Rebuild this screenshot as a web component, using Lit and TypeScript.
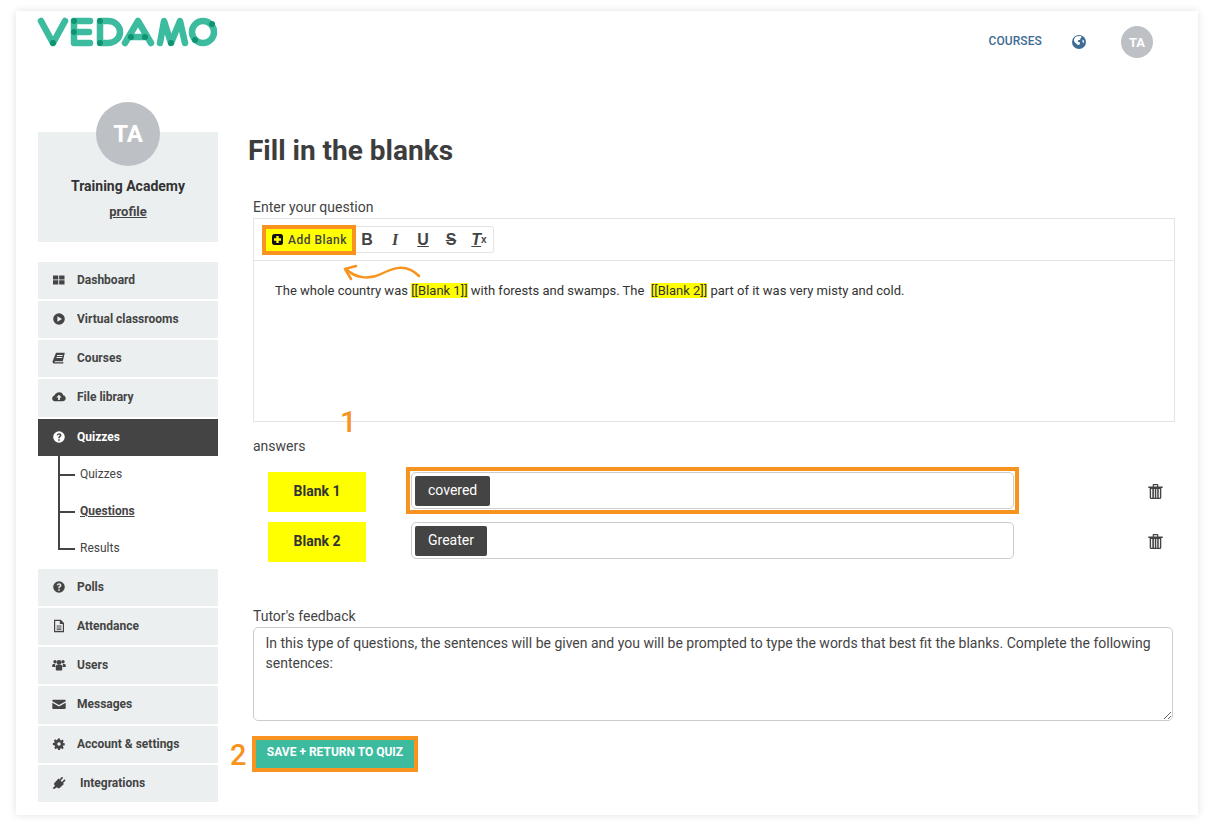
import { LitElement, html, css, svg } from "lit";
import { customElement } from "lit/decorators.js";

const icons: Record<string, unknown> = {
  dashboard: svg`<path d="M1 2.500h5.300v4H1zM7.200 2.500h5.300v4H7.200zM1 7.300h5.300v4.200H1zM7.200 7.300h5.300v4.200H7.200z"/>`,
  play: svg`<path fill-rule="evenodd" d="M7 1.200a5.800 5.800 0 1 0 0 11.600A5.800 5.800 0 0 0 7 1.200zM5.400 4.200l4.600 2.800-4.600 2.800z"/>`,
  book: svg`<path d="M4 1.800h8.800l-2 8.400H3.200c-.8 0-1 .9-.3 1h8.600l-.3 1.200H2.200c-1.300 0-1.900-1-1.600-2.200zM5 4v.9h5.600l.2-.9zM4.500 6v.9h5.600l.2-.9z" fill-rule="evenodd"/>`,
  cloud: svg`<path fill-rule="evenodd" d="M7.500 2.300c1.900 0 3.300 1.300 3.600 3 1.500.3 2.600 1.400 2.600 3 0 1.800-1.400 3-3.100 3H3.300C1.500 11.300.2 10 .2 8.400c0-1.400.9-2.500 2.200-2.900.5-1.900 2.700-3.200 5.100-3.200zM7 4.800L4.300 7.600h1.800v2.300h1.800V7.600h1.800z"/>`,
  question: svg`<path fill-rule="evenodd" d="M7 1.200a5.800 5.800 0 1 0 0 11.600A5.800 5.800 0 0 0 7 1.200zM6.200 9.300h1.600v1.500H6.200zM4.700 5.300C4.900 4 5.900 3.300 7.100 3.300c1.300 0 2.300.8 2.300 2 0 1-.5 1.400-1.100 1.800-.4.300-.5.500-.5 1.200H6.200c0-1.100.2-1.600.9-2.100.4-.3.700-.5.700-.9s-.3-.7-.8-.7-.8.300-.9.900z"/>`,
  file: svg`<path fill-rule="evenodd" d="M2 .8h6.800L12 4v9.200H2zM3.200 2v10h7.600V5H7.800V2zM4.600 6.400h4.800v1H4.600zM4.600 8.400h4.800v1H4.600zM4.600 10.300h4.800v1H4.600z"/>`,
  users: svg`<circle cx="3" cy="3.800" r="1.700"/><circle cx="11" cy="3.800" r="1.700"/><circle cx="7" cy="4.500" r="2.400"/><path d="M.2 9V7.400c0-1 .8-1.500 1.800-1.500h1.200c-.3 1-.1 2.100.4 3.100zM13.800 9V7.400c0-1-.8-1.500-1.800-1.500h-1.200c.3 1 .1 2.100-.4 3.100zM3.800 7.800c.5-.7 1-1 1.500-1 .5.400 2.900.4 3.400 0 .5 0 1 .3 1.500 1v3.600c0 .7-.5 1.100-1.100 1.100H4.900c-.6 0-1.100-.4-1.100-1.100z"/>`,
  mail: svg`<path d="M1.200 2.800h11.600c.5 0 .9.400.9.900v.5L7 8 .3 4.200v-.5c0-.5.400-.9.900-.9zM.3 5.800L7 9.600l6.700-3.800v5.300c0 .5-.4.900-.9.900H1.200c-.5 0-.9-.4-.9-.9z"/>`,
  gear: svg`<path fill-rule="evenodd" d="M5.900 1h2.200l.3 1.700 1 .4 1.400-1 1.500 1.500-1 1.400.4 1 1.700.3v2.200l-1.700.3-.4 1 1 1.400-1.500 1.500-1.400-1-1 .4-.3 1.700H5.900l-.3-1.700-1-.4-1.400 1-1.500-1.500 1-1.400-.4-1L.1 8.100V5.900l1.700-.3.4-1-1-1.400 1.500-1.500 1.400 1 1-.4zM7 5a2 2 0 1 0 0 4 2 2 0 0 0 0-4z" transform="translate(.7 .7) scale(.9)"/>`,
  plug: svg`<path d="M.6 13.400l2.700-2.900-.8-.9c-.5-.6-.4-1.500.1-2L7 2.800l1 1 2.300-2.500c.4-.4 1-.4 1.300 0s.3.900 0 1.300L9.300 5l1.500 1.400L13 4.200c.4-.4.900-.4 1.300 0s.3.900 0 1.200L12 7.700l1 1-4.700 4.300c-.7.500-1.500.6-2 .1l-1-.9-2.900 2z" transform="scale(.92)"/>`,
};

const menuTop = [
  { label: "Dashboard", icon: "dashboard" },
  { label: "Virtual classrooms", icon: "play" },
  { label: "Courses", icon: "book" },
  { label: "File library", icon: "cloud" },
  { label: "Quizzes", icon: "question", active: true },
];

const menuBottom = [
  { label: "Polls", icon: "question" },
  { label: "Attendance", icon: "file" },
  { label: "Users", icon: "users" },
  { label: "Messages", icon: "mail" },
  { label: "Account & settings", icon: "gear" },
  { label: "Integrations", icon: "plug", wide: true },
];

const subMenu = [
  { label: "Quizzes" },
  { label: "Questions", current: true },
  { label: "Results" },
];

const answers = [
  { blank: "Blank 1", word: "covered", marked: true },
  { blank: "Blank 2", word: "Greater" },
];

const trash = html`<svg class="trash" viewBox="0 0 15 15" width="15" height="15">
  <path d="M.3 2.600h14.400v1.300H.3zM4.700 2.600V1.100c0-.6.400-1 1-1h3.600c.6 0 1 .4 1 1v1.500H9.100V1.300H5.900v1.300z" fill="#444"/>
  <path fill-rule="evenodd" d="M1.700 3.800h11.600v9.700c0 .9-.6 1.500-1.400 1.500H3.100c-.8 0-1.400-.6-1.400-1.500zM3.100 5v8.400c0 .2.100.3.300.3h.9V5zM5.900 5v8.700h.9V5zM8.300 5v8.700h.9V5zM10.700 5v8.700h.9c.2 0 .3-.1.300-.3V5z" fill="#444"/>
</svg>`;

@customElement("app-root")
export class AppRoot extends LitElement {
  static styles = css`
    :host {
      display: block;
      box-sizing: border-box;
      height: 826px;
      padding: 11px 16px;
      background: #fff;
      font-family: Roboto, "Liberation Sans", sans-serif;
      font-size: 14px;
      color: #444;
    }
    .page {
      position: relative;
      height: 804px;
      background: #fff;
      box-shadow: 0 0 8px rgba(0, 0, 0, 0.12);
      overflow: hidden;
    }
    header {
      display: flex;
      height: 91px;
      padding: 1px 45px 0 18px;
      box-sizing: border-box;
    }
    .logo {
      display: block;
    }
    .top-nav {
      display: flex;
      align-items: center;
      margin-left: auto;
      margin-top: 14px;
      height: 32px;
    }
    .top-nav .link {
      padding-bottom: 2px;
      font-size: 12px;
      font-weight: 500;
      letter-spacing: 0.1px;
      color: #3f6c94;
    }
    .top-nav svg {
      margin: 0 35px 0 30px;
    }
    .avatar {
      display: flex;
      align-items: center;
      justify-content: center;
      border-radius: 50%;
      background: #bdc1c5;
      color: #fff;
      font-weight: 700;
    }
    .avatar.small {
      width: 32px;
      height: 32px;
      font-size: 13px;
    }
    .avatar.big {
      width: 64px;
      height: 64px;
      font-size: 24px;
      margin-top: -30px;
    }
    .content {
      display: flex;
      padding: 0 23px 0 22px;
    }
    aside {
      flex: 0 0 180px;
      width: 180px;
    }
    .profile {
      display: flex;
      flex-direction: column;
      align-items: center;
      height: 110px;
      margin-top: 30px;
      margin-bottom: 20px;
      background: #ebeff0;
    }
    .profile .name {
      margin-top: 10px;
      font-weight: 700;
      font-size: 14px;
      line-height: 20px;
      color: #333;
    }
    .profile .link {
      margin-top: 6px;
      font-size: 13px;
      font-weight: 700;
      line-height: 20px;
      text-decoration: underline;
    }
    .menu {
      display: flex;
      flex-direction: column;
      gap: 2px;
    }
    .item {
      display: flex;
      align-items: center;
      gap: 11px;
      box-sizing: border-box;
      height: 37.15px;
      padding: 0 0 1.1px 14px;
      background: #ebeff0;
      font-size: 12px;
      font-weight: 700;
      color: #444;
    }
    .item svg {
      flex: none;
      fill: currentColor;
    }
    .item.wide {
      gap: 14px;
    }
    .item.active {
      background: #444;
      color: #fff;
    }
    .sub {
      display: flex;
      flex-direction: column;
      height: 113.35px;
    }
    .sub a {
      position: relative;
      display: block;
      height: 37px;
      padding-left: 42px;
      line-height: 36px;
      font-size: 12px;
      color: #444;
    }
    .sub a.current {
      font-weight: 700;
      text-decoration: underline;
    }
    .sub a::before {
      content: "";
      position: absolute;
      left: 20px;
      top: 0;
      bottom: 0;
      width: 2px;
      background: #444;
    }
    .sub a:last-child::before {
      bottom: 17px;
    }
    .sub a::after {
      content: "";
      position: absolute;
      left: 20px;
      top: 18px;
      width: 17px;
      height: 2px;
      background: #444;
    }
    main {
      flex: 1;
      margin-left: 30px;
      min-width: 0;
    }
    h1 {
      margin: 32px 0 29px;
      font-size: 28px;
      font-weight: 700;
      line-height: 34px;
      color: #3d3d3d;
    }
    .form {
      margin-left: 5px;
    }
    label {
      display: block;
      line-height: 20px;
      font-size: 14px;
      color: #444;
    }
    .editor {
      height: 204px;
      margin-top: 1px;
      box-sizing: border-box;
      border: 1px solid #e3e3e3;
    }
    .toolbar {
      display: flex;
      align-items: flex-start;
      box-sizing: border-box;
      height: 42px;
      padding: 7px 0 0 9px;
      border-bottom: 1px solid #e3e3e3;
    }
    .tools {
      display: flex;
      align-items: center;
      box-sizing: border-box;
      width: 231px;
      height: 27px;
      padding-left: 2px;
      border: 1px solid #e3e3e3;
      border-radius: 3px;
    }
    .add {
      display: flex;
      flex: none;
      align-items: center;
      gap: 5px;
      box-sizing: border-box;
      width: 86px;
      height: 22px;
      margin-right: 1px;
      padding-left: 6px;
      background: #ff0;
      outline: 4px solid #f7931e;
      font-size: 12px;
      font-weight: 500;
      letter-spacing: 0.5px;
      white-space: nowrap;
      color: #444;
    }
    .tool {
      display: flex;
      justify-content: center;
      align-items: center;
      flex: none;
      width: 28px;
      font-family: "Liberation Sans", sans-serif;
      font-size: 16px;
      line-height: 20px;
      font-weight: 700;
      color: #444;
    }
    .tool.i {
      font-family: "Liberation Serif", serif;
      font-style: italic;
    }
    .tool.u {
      text-decoration: underline;
    }
    .tool.s {
      text-decoration: line-through;
    }
    .tool .tx {
      font-style: italic;
      text-decoration: underline;
    }
    .tool sub {
      font-size: 10px;
      line-height: 0;
      font-style: normal;
    }
    .text {
      margin: 20px 0 0 21px;
      font-size: 13px;
      line-height: 20px;
      color: #333;
      white-space: pre;
    }
    .text mark {
      background: #ff0;
      color: #333;
    }
    .answers-label {
      margin-top: 14px;
    }
    .rows {
      display: flex;
      flex-direction: column;
      gap: 10px;
      margin-top: 16px;
    }
    .row {
      display: flex;
      align-items: flex-start;
      padding: 0 12.5px 0 15px;
    }
    .blank {
      flex: 0 0 98px;
      height: 40px;
      line-height: 39px;
      text-align: center;
      background: #ff0;
      font-weight: 700;
      color: #333;
    }
    .input {
      position: relative;
      box-sizing: border-box;
      flex: 0 0 603px;
      height: 37px;
      margin-left: 45px;
      padding: 3px;
      border: 1px solid #ccc;
      border-radius: 5px;
      background: #fff;
    }
    .input.marked::after {
      content: "";
      position: absolute;
      inset: -6px;
      border: 4px solid #f7931e;
    }
    .tag {
      display: inline-block;
      height: 30px;
      padding: 0 13px;
      line-height: 28px;
      border-radius: 2px;
      background: #444;
      color: #fff;
      font-size: 14px;
    }
    .trash {
      display: block;
      margin: 12px 0 0 auto;
    }
    .feedback-label {
      margin-top: 44px;
    }
    textarea {
      display: block;
      box-sizing: border-box;
      width: 920px;
      height: 94px;
      margin: 1px 0 0;
      padding: 5px 12px 5px 11.5px;
      border: 1px solid #ccc;
      border-radius: 5px;
      outline: none;
      font-family: inherit;
      font-size: 14px;
      line-height: 20px;
      color: #444;
      background: #fff;
    }
    .save {
      display: block;
      box-sizing: border-box;
      width: 158px;
      height: 28px;
      margin: 19px 0 0 3px;
      padding: 0 0 5px;
      border: 0;
      background: #3dbb9f;
      outline: 4px solid #f7931e;
      color: #fff;
      font-family: inherit;
      font-size: 12px;
      font-weight: 700;
      line-height: 24px;
    }
    .step {
      position: absolute;
      font-size: 29px;
      line-height: 34px;
      font-weight: 500;
      color: #f7931e;
    }
    .step.one {
      left: 324px;
      top: 394px;
    }
    .step.two {
      left: 214px;
      top: 727px;
    }
    .arrow {
      position: absolute;
      left: 324px;
      top: 251px;
      fill: none;
      stroke: #f7931e;
      stroke-width: 2.5;
      stroke-linecap: round;
      stroke-linejoin: round;
    }
  `;

  private renderItem(it: { label: string; icon: string; active?: boolean; wide?: boolean }) {
    const cls = `item${it.active ? " active" : ""}${it.wide ? " wide" : ""}`;
    return html`<div class=${cls}>
      <svg viewBox="0 0 14 14" width="14" height="14">${icons[it.icon]}</svg>
      <span>${it.label}</span>
    </div>`;
  }

  render() {
    return html`
      <div class="page">
        <header>
          <svg class="logo" viewBox="34 12 190 40" width="190" height="40">
            <g fill="none" stroke="#3dbb9f" stroke-width="6.5" stroke-linecap="round" stroke-linejoin="round">
              <path d="M41 21L53 43 65 21"/>
              <path d="M90 21H74v22h16M74 32h15"/>
              <path d="M100 21h8c7 0 12 5 12 11s-5 11-12 11h-8z"/>
              <path d="M125 43l13-22 13 22M131 37h14"/>
              <path d="M160 43l4-22 7 22 9-22 5 22"/>
              <circle cx="203" cy="32" r="11"/>
            </g>
            <g fill="#0e9470">
              <circle cx="53" cy="43" r="3"/>
              <circle cx="74" cy="21" r="3"/>
              <circle cx="74" cy="32" r="3"/>
              <circle cx="100" cy="21" r="3"/>
              <circle cx="100" cy="43" r="3"/>
              <circle cx="131" cy="37" r="3"/>
              <circle cx="145" cy="37" r="3"/>
              <circle cx="171" cy="43" r="3"/>
              <circle cx="212" cy="24" r="3"/>
              <circle cx="195" cy="40" r="3"/>
            </g>
          </svg>
          <nav class="top-nav">
            <span class="link">COURSES</span>
            <svg viewBox="0 0 14 14" width="14" height="14">
              <circle cx="7" cy="7" r="7" fill="#3f6c94"/>
              <path d="M5 1.200L8.500 1c1.500.5 1.300 1.500.4 2-.8.500-.3 1.300-1.100 1.800-.7.400-1.500.2-1.900.9-.3.600.3 1.300 1 1.400.9.200 1.300.8 1 1.700-.2.600-.8.900-1.100 1.400C5 9.600 4.500 8.700 3.500 7.900 2.500 7 1.800 6 2 4.500 2.300 3 3.500 1.800 5 1.200zM11 4.500c.8 1 1.100 2 1 3.200-.4.200-.9.100-1.200-.3-.3-.5-.4-1.200-.4-1.800 0-.5.200-.9.600-1.100z" fill="#fff"/>
            </svg>
            <div class="avatar small">TA</div>
          </nav>
        </header>
        <div class="content">
          <aside>
            <div class="profile">
              <div class="avatar big">TA</div>
              <div class="name">Training Academy</div>
              <a class="link">profile</a>
            </div>
            <div class="menu">
              ${menuTop.map((it) => this.renderItem(it))}
            </div>
            <div class="sub">
              ${subMenu.map((s) => html`<a class=${s.current ? "current" : ""}>${s.label}</a>`)}
            </div>
            <div class="menu">
              ${menuBottom.map((it) => this.renderItem(it))}
            </div>
          </aside>
          <main>
            <h1>Fill in the blanks</h1>
            <div class="form">
              <label>Enter your question</label>
              <div class="editor">
                <div class="toolbar">
                  <div class="tools">
                    <div class="add">
                      <svg viewBox="0 0 11 11" width="11" height="11">
                        <rect width="11" height="11" rx="2.500" fill="#111"/>
                        <path d="M4.300 2h2.400v2.300H9v2.400H6.700V9H4.300V6.700H2V4.300h2.300z" fill="#ff0"/>
                      </svg>
                      <span>Add Blank</span>
                    </div>
                    <span class="tool">B</span>
                    <span class="tool i">I</span>
                    <span class="tool u">U</span>
                    <span class="tool s">S</span>
                    <span class="tool"><span class="tx">T</span><sub>x</sub></span>
                  </div>
                </div>
                <div class="text">The whole country was <mark>[[Blank 1]]</mark> with forests and swamps. The  <mark>[[Blank 2]]</mark> part of it was very misty and cold.</div>
              </div>
              <label class="answers-label">answers</label>
              <div class="rows">
                ${answers.map(
                  (a) => html`<div class="row">
                    <div class="blank">${a.blank}</div>
                    <div class="input ${a.marked ? "marked" : ""}"><span class="tag">${a.word}</span></div>
                    ${trash}
                  </div>`
                )}
              </div>
              <label class="feedback-label">Tutor's feedback</label>
              <textarea>In this type of questions, the sentences will be given and you will be prompted to type the words that best fit the blanks. Complete the following sentences:</textarea>
              <button class="save">SAVE + RETURN TO QUIZ</button>
            </div>
          </main>
        </div>
        <span class="step one">1</span>
        <span class="step two">2</span>
        <svg class="arrow" width="84" height="22" viewBox="0 0 84 22">
          <path d="M79 14C66 1 53 6 41 12 29 18 15 16 6 7"/>
          <path d="M5 7l11-3M5 7l6 10"/>
        </svg>
      </div>
    `;
  }
}
